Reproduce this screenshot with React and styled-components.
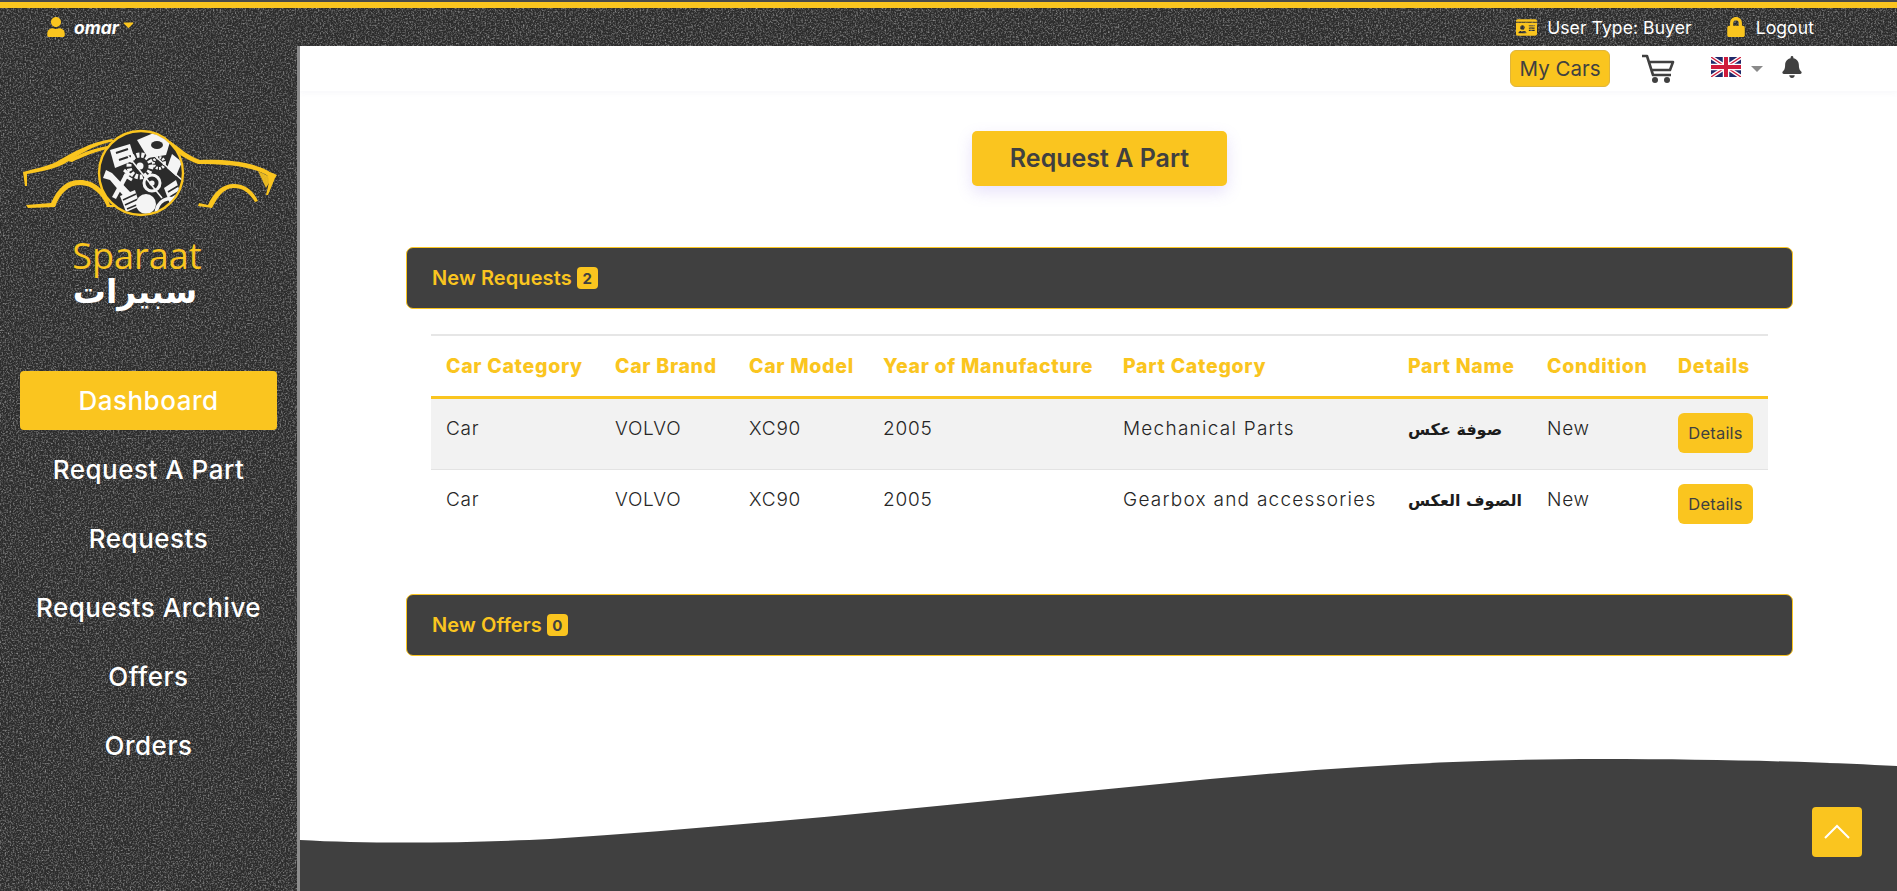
import React from "react";
import styled, { createGlobalStyle } from "styled-components";
import { FaUser, FaIdCard, FaLock, FaBell, FaCaretDown } from "react-icons/fa";

const YELLOW = "#fac51f";
const DARK = "#404040";
const FONT = '"Inter", "Noto Sans", sans-serif';
const ARABIC = '"DejaVu Sans", "Liberation Sans", sans-serif';

const Global = createGlobalStyle`
  html, body { margin: 0; padding: 0; background: #fff; }
  body { font-family: ${FONT}; overflow: hidden; }
  * { box-sizing: border-box; }
`;

const Shell = styled.div`
  position: relative;
  width: 1897px;
  height: 891px;
  overflow: hidden;
  background: #2c2c2c;
  display: flex;
  flex-direction: column;
`;
const AsphaltSvg = styled.svg`
  position: absolute;
  inset: 0;
  width: 100%;
  height: 100%;
`;
const Strip = styled.div`
  position: relative;
  height: 8px;
  background: ${YELLOW};
  border-top: 2px solid #4a4a4a;
  flex: none;
`;
const TopBar = styled.header`
  position: relative;
  height: 38px;
  flex: none;
  display: flex;
  align-items: center;
  justify-content: space-between;
  padding: 0 83px 0 46px;
  color: #fff;
`;
const UserMenu = styled.div`
  display: flex;
  align-items: center;
  color: ${YELLOW};
  svg { display: block; }
`;
const UserName = styled.span`
  margin: 0 1px 0 8px;
  color: #fff;
  font-size: 17.5px;
  font-weight: 700;
  font-style: italic;
`;
const UserCaret = styled(FaCaretDown)`
  margin-top: -5px;
`;
const TopLinks = styled.div`
  display: flex;
  align-items: center;
  gap: 34px;
`;
const TopLink = styled.span`
  display: flex;
  align-items: center;
  gap: 10px;
  font-size: 17.5px;
  font-weight: 400;
  letter-spacing: 0.1px;
  svg { color: ${YELLOW}; display: block; }
`;
const Body = styled.div`
  position: relative;
  flex: 1;
  min-height: 0;
  display: flex;
`;
const Sidebar = styled.aside`
  width: 300px;
  flex: none;
  border-right: 3px solid #8c8c8c;
  padding: 82px 20px 0;
  display: flex;
  flex-direction: column;
  align-items: stretch;
`;
const LogoBlock = styled.div`
  height: 243px;
  display: flex;
  flex-direction: column;
  align-items: center;
`;
const LogoArt = styled.svg`
  display: block;
  width: 257px;
  height: 92px;
  flex: none;
`;
const BrandLatin = styled.div`
  margin: 17px 23px 0 0;
  color: ${YELLOW};
  font-family: "Open Sans", sans-serif;
  font-size: 36px;
  line-height: 38px;
  font-weight: 400;
`;
const BrandArabic = styled.div`
  margin: 0 27px 0 0;
  color: #fff;
  font-family: ${ARABIC};
  font-size: 33px;
  line-height: 34px;
  font-weight: 700;
`;
const Nav = styled.nav`
  display: flex;
  flex-direction: column;
  gap: 10px;
`;
const NavItem = styled.a`
  height: 59px;
  border-radius: 4px;
  display: flex;
  align-items: center;
  justify-content: center;
  color: #fff;
  font-size: 26px;
  font-weight: 500;
  letter-spacing: 0.5px;
  white-space: nowrap;
  background: ${(p) => (p.$active ? YELLOW : "transparent")};
`;
const Main = styled.main`
  flex: 1;
  min-width: 0;
  background: #fff;
  display: flex;
  flex-direction: column;
`;
const MainHeader = styled.div`
  height: 45px;
  flex: none;
  display: flex;
  align-items: center;
  padding-right: 94px;
  justify-content: flex-end;
  box-shadow: 0 2px 6px rgba(90, 90, 160, 0.05);
`;
const MyCars = styled.button`
  width: 100px;
  height: 37px;
  margin-right: 31px;
  border: 1px solid #e0b53a;
  border-radius: 6px;
  background: ${YELLOW};
  color: ${DARK};
  font-family: ${FONT};
  font-size: 20.5px;
  padding: 0;
`;
const CartSvg = styled.svg`
  width: 34px;
  height: 30px;
  margin-right: 36px;
  display: block;
`;
const FlagSvg = styled.svg`
  width: 30px;
  height: 20px;
  display: block;
  margin-top: -3px;
`;
const LangCaret = styled.span`
  width: 0;
  height: 0;
  margin: 0 18px 0 10px;
  border-left: 6px solid transparent;
  border-right: 6px solid transparent;
  border-top: 6px solid #8a8a8a;
`;
const BellWrap = styled.span`
  color: ${DARK};
  display: flex;
  margin-top: -3px;
  svg { display: block; }
`;
const Content = styled.div`
  flex: 1;
  padding: 40px 104px 0 106px;
  display: flex;
  flex-direction: column;
`;
const RequestButton = styled.button`
  align-self: center;
  width: 255px;
  height: 55px;
  margin-bottom: 61px;
  border: 0;
  border-radius: 5px;
  background: ${YELLOW};
  color: ${DARK};
  font-family: ${FONT};
  font-size: 25px;
  font-weight: 600;
  box-shadow: 0 6px 16px rgba(120, 90, 230, 0.18);
  padding: 0 0 2px;
`;
const SectionBar = styled.div`
  height: 62px;
  flex: none;
  padding: 0 25px;
  display: flex;
  align-items: center;
  gap: 5px;
  border: 1px solid ${YELLOW};
  border-radius: 7px;
  background: ${DARK};
  color: ${YELLOW};
  font-size: 20px;
  font-weight: 600;
  letter-spacing: 0.1px;
`;
const Badge = styled.span`
  min-width: 21px;
  height: 22px;
  border-radius: 4px;
  background: ${YELLOW};
  color: ${DARK};
  font-size: 15px;
  font-weight: 700;
  display: flex;
  align-items: center;
  justify-content: center;
`;
const TableWrap = styled.div`
  padding: 25px 25px 53px;
`;
const Table = styled.table`
  width: 100%;
  table-layout: fixed;
  border-collapse: separate;
  border-spacing: 0;
  border-top: 2px solid #e6e6e6;
`;
const Th = styled.th`
  height: 63px;
  padding: 0 15px 1px;
  text-align: left;
  color: ${YELLOW};
  font-size: 19.5px;
  font-weight: 800;
  letter-spacing: 0.7px;
  white-space: nowrap;
  border-bottom: 3px solid ${YELLOW};
`;
const Row = styled.tr`
  background: ${(p) => (p.$shaded ? "#f2f2f2" : "#fff")};
  td { border-bottom: ${(p) => (p.$shaded ? "1px solid #e3e3e3" : "0")}; }
`;
const Td = styled.td`
  height: 71px;
  padding: 15px 15px 0;
  vertical-align: top;
  color: #262626;
  font-size: 19px;
  line-height: 29px;
  font-weight: 300;
  letter-spacing: 0.75px;
  white-space: nowrap;
`;
const PartCell = styled(Td)`
  letter-spacing: 1.25px;
`;
const ArabicName = styled.span`
  font-family: ${ARABIC};
  font-size: 16px;
  font-weight: 700;
  letter-spacing: 0;
  color: #1c1c1c;
`;
const DetailsBtn = styled.button`
  display: block;
  width: 75px;
  height: 40px;
  margin-top: -1px;
  border: 0;
  border-radius: 6px;
  background: ${YELLOW};
  color: ${DARK};
  font-family: ${FONT};
  font-size: 16.5px;
  letter-spacing: 0.2px;
  padding: 0;
`;
const Wave = styled.svg`
  display: block;
  width: 1597px;
  height: 136px;
  flex: none;
`;
const ScrollTop = styled.button`
  position: absolute;
  right: 35px;
  bottom: 34px;
  width: 50px;
  height: 50px;
  border: 0;
  border-radius: 4px;
  background: ${YELLOW};
  display: flex;
  align-items: center;
  justify-content: center;
  padding: 0;
`;

const columns = [
  ["Car Category", 169],
  ["Car Brand", 134],
  ["Car Model", 134],
  ["Year of Manufacture", 240],
  ["Part Category", 285],
  ["Part Name", 139],
  ["Condition", 131],
  ["Details", 105],
];

const rows = [
  { part: "Mechanical Parts", name: "صوفة عكس", shaded: true },
  { part: "Gearbox and accessories", name: "الصوف العكس", shaded: false },
];

function Asphalt() {
  return (
    <AsphaltSvg aria-hidden="true">
      <filter id="grain" x="0" y="0" width="100%" height="100%">
        <feTurbulence type="fractalNoise" baseFrequency="0.6" numOctaves="3" seed="4" />
        <feColorMatrix
          type="matrix"
          values="0 0 0 0 0.5  0 0 0 0 0.5  0 0 0 0 0.5  1.5 0 0 0 -0.66"
        />
      </filter>
      <rect width="100%" height="100%" filter="url(#grain)" />
    </AsphaltSvg>
  );
}

function Logo() {
  const w = "#f4f4f4";
  const d = "#2b2b2b";
  return (
    <LogoArt viewBox="0 0 257 92" aria-hidden="true">
      <defs>
        <clipPath id="hub">
          <circle cx="121" cy="45" r="41" />
        </clipPath>
      </defs>
      <g fill={YELLOW} transform="translate(2 0)">
        <path d="M1 44 C14 40 24 39 34 34 C52 24 68 14 90 11 L92 13 C70 18 58 26 42 36 C30 42 16 44 5 46 L5 58 L3 58 Z" />
        <path d="M45 33 C60 24 74 20 90 17 L90 20 C74 23 60 29 50 34 Z" />
        <path d="M148 13 C158 20 166 28 178 32 C204 31 232 34 248 44 L255 47 L253 50 L246 67 L244 67 C246 58 248 54 246 48 C230 38 204 36 176 36 C164 32 154 24 146 17 Z" />
        <path d="M236 43 L250 50 L244 60 Z" opacity="0.9" />
        <path d="M4 77 L29 75 C36 60 44 52 58 52 C72 52 84 62 88 77 L94 77 L94 79 L85 79 C80 66 70 57 58 57 C46 57 38 66 33 79 L6 80 Z" />
        <path d="M177 75 L186 77 C192 64 200 56 212 56 C224 56 232 64 236 73 L233 74 C228 66 222 60 212 60 C202 60 196 68 190 80 L176 78 Z" />
      </g>
      <circle cx="121" cy="45" r="42" fill={d} stroke={YELLOW} strokeWidth="2.4" />
      <g clipPath="url(#hub)" fill={w} stroke={w}>
        <path d="M90 22 L110 16 L115 32 L95 40 Z" stroke="none" />
        <path d="M96 25 L108 21 M99 32 L111 28" stroke={d} strokeWidth="2" />
        <path d="M117 12 L136 4 L150 14 L146 27 L128 30 Z" stroke="none" />
        <ellipse cx="137" cy="17" rx="6" ry="4" fill={d} stroke="none" />
        <circle cx="120" cy="38" r="11" fill="none" strokeWidth="5" strokeDasharray="3 1.8" />
        <circle cx="120" cy="38" r="3.5" stroke="none" />
        <circle cx="139" cy="35" r="5.5" fill="none" strokeWidth="3" strokeDasharray="2 1.2" />
        <path d="M152 26 L162 34 L156 48 L147 40 Z" stroke="none" />
        <path d="M86 42 L92 45 L112 66 L106 71 L90 52 L83 50 Z" stroke="none" />
        <path d="M107 46 L94 70" strokeWidth="4.5" />
        <path d="M110 47 L104 42 M112 52 L104 47" strokeWidth="3" />
        <path d="M108 28 L142 70 M128 22 L162 52" fill="none" strokeWidth="1.6" />
        <circle cx="132" cy="55" r="8" fill="none" strokeWidth="3" />
        <circle cx="132" cy="55" r="2.6" stroke="none" />
        <path d="M144 60 L156 52 L162 70 L150 76 Z" stroke="none" />
        <path d="M148 64 L158 58 M150 69 L160 63" stroke={d} strokeWidth="1.6" />
        <path d="M100 68 L115 62 L120 78 L106 84 Z" stroke="none" />
        <path d="M103 72 L116 66 M105 77 L118 71 M107 81 L119 76" stroke={d} strokeWidth="1.5" />
        <circle cx="126" cy="76" r="10" stroke="none" />
        <path d="M136 86 C137 72 148 68 158 72" fill="none" strokeWidth="3.5" />
        <path d="M144 86 C145 78 150 76 156 77" fill="none" strokeWidth="2.5" />
      </g>
    </LogoArt>
  );
}

function Cart() {
  return (
    <CartSvg viewBox="0 0 34 30" aria-hidden="true">
      <path
        d="M1 2 H6 L12 21 H30 M8.5 8 H32 L29 16 H11"
        fill="none"
        stroke={DARK}
        strokeWidth="2.6"
        strokeLinejoin="round"
      />
      <circle cx="14" cy="26" r="3" fill={DARK} />
      <circle cx="26" cy="26" r="3" fill={DARK} />
    </CartSvg>
  );
}

function UkFlag() {
  return (
    <FlagSvg viewBox="0 0 60 40" preserveAspectRatio="none" aria-hidden="true">
      <rect width="60" height="40" fill="#1f2a6b" />
      <path d="M0 0 L60 40 M60 0 L0 40" stroke="#fff" strokeWidth="8" />
      <path d="M0 0 L60 40 M60 0 L0 40" stroke="#cf1b3b" strokeWidth="2.6" />
      <path d="M30 0 V40 M0 20 H60" stroke="#fff" strokeWidth="13" />
      <path d="M30 0 V40 M0 20 H60" stroke="#cf1b3b" strokeWidth="8" />
    </FlagSvg>
  );
}

export default function App() {
  return (
    <Shell>
      <Global />
      <Asphalt />
      <Strip />
      <TopBar>
        <UserMenu>
          <FaUser size={20} />
          <UserName>omar</UserName>
          <UserCaret size={17} />
        </UserMenu>
        <TopLinks>
          <TopLink>
            <FaIdCard size={21} />
            User Type: Buyer
          </TopLink>
          <TopLink>
            <FaLock size={20} />
            Logout
          </TopLink>
        </TopLinks>
      </TopBar>
      <Body>
        <Sidebar>
          <LogoBlock>
            <Logo />
            <BrandLatin>Sparaat</BrandLatin>
            <BrandArabic>سبيرات</BrandArabic>
          </LogoBlock>
          <Nav>
            <NavItem $active>Dashboard</NavItem>
            <NavItem>Request A Part</NavItem>
            <NavItem>Requests</NavItem>
            <NavItem>Requests Archive</NavItem>
            <NavItem>Offers</NavItem>
            <NavItem>Orders</NavItem>
          </Nav>
        </Sidebar>
        <Main>
          <MainHeader>
            <MyCars>My Cars</MyCars>
            <Cart />
            <UkFlag />
            <LangCaret />
            <BellWrap>
              <FaBell size={22} />
            </BellWrap>
          </MainHeader>
          <Content>
            <RequestButton>Request A Part</RequestButton>
            <SectionBar>
              New Requests <Badge>2</Badge>
            </SectionBar>
            <TableWrap>
              <Table>
                <colgroup>
                  {columns.map(([label, width]) => (
                    <col key={label} width={width} />
                  ))}
                </colgroup>
                <thead>
                  <tr>
                    {columns.map(([label]) => (
                      <Th key={label}>{label}</Th>
                    ))}
                  </tr>
                </thead>
                <tbody>
                  {rows.map((r) => (
                    <Row key={r.name} $shaded={r.shaded}>
                      <Td>Car</Td>
                      <Td>VOLVO</Td>
                      <Td>XC90</Td>
                      <Td>2005</Td>
                      <PartCell>{r.part}</PartCell>
                      <Td>
                        <ArabicName>{r.name}</ArabicName>
                      </Td>
                      <Td>New</Td>
                      <Td>
                        <DetailsBtn>Details</DetailsBtn>
                      </Td>
                    </Row>
                  ))}
                </tbody>
              </Table>
            </TableWrap>
            <SectionBar>
              New Offers <Badge>0</Badge>
            </SectionBar>
          </Content>
          <Wave viewBox="0 0 1597 136" preserveAspectRatio="none" aria-hidden="true">
            <path
              d="M0 85 C70 89 170 88 250 84 C480 69 700 44 910 24 C1040 12 1160 4 1300 4 C1420 4 1520 7 1597 11 V136 H0 Z"
              fill={DARK}
            />
          </Wave>
        </Main>
      </Body>
      <ScrollTop aria-label="Back to top">
        <svg width="28" height="18" viewBox="0 0 28 18" aria-hidden="true">
          <path d="M2 15 L14 3 L26 15" fill="none" stroke="#fff" strokeWidth="2" />
        </svg>
      </ScrollTop>
    </Shell>
  );
}
